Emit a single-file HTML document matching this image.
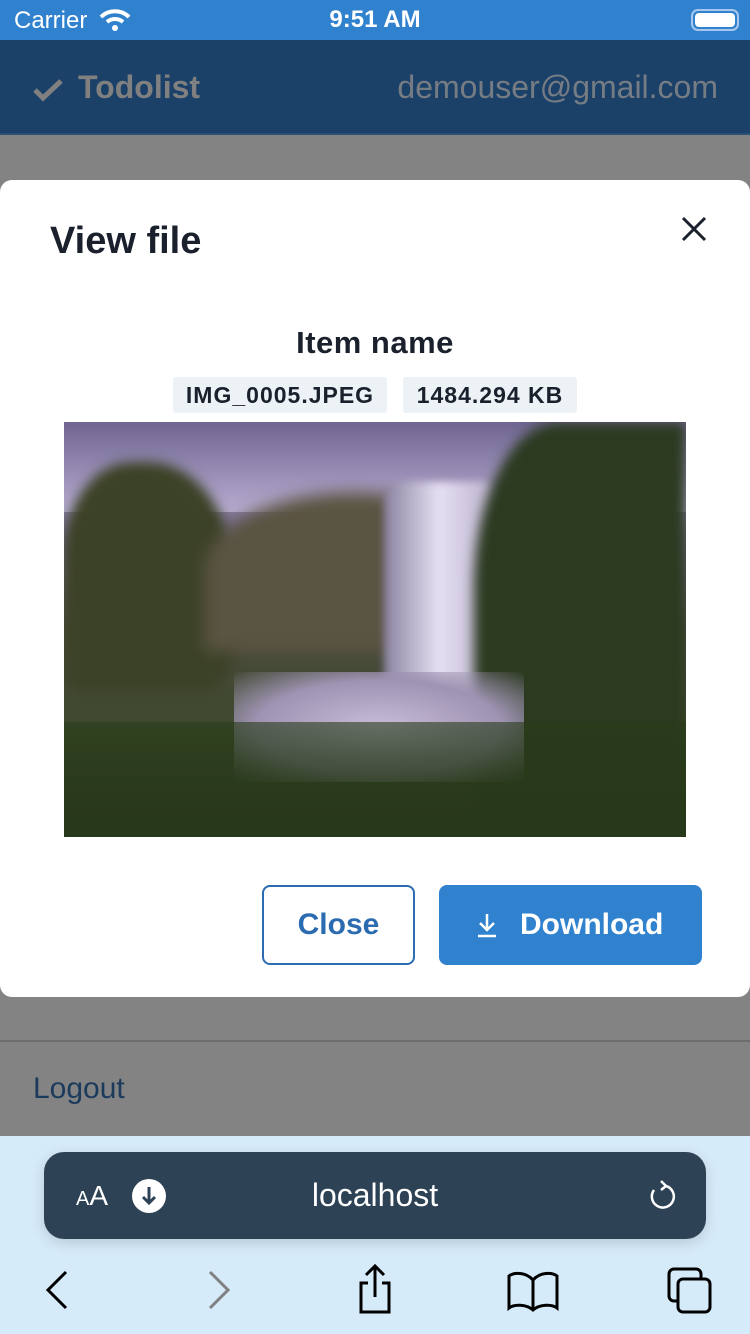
<!DOCTYPE html>
<html><head><meta charset="utf-8"><style>
*{box-sizing:border-box;margin:0;padding:0}
body{width:750px;height:1334px;position:relative;overflow:hidden;font-family:"Liberation Sans",sans-serif;background:#838383}
.abs{position:absolute}
</style></head><body>
<div class="abs" style="left:0;top:0;width:750px;height:40px;background:#3182ce"></div>
<div class="abs" style="left:14px;top:7px;color:#fff;font-size:24px">Carrier</div>
<svg class="abs" style="left:98px;top:8px" width="34" height="24" viewBox="0 0 34 24"><path d="M3 9 A20 20 0 0 1 31 9" stroke="#fff" stroke-width="4" fill="none"/><path d="M9 14 A12 12 0 0 1 25 14" stroke="#fff" stroke-width="4" fill="none"/><circle cx="17" cy="20" r="3" fill="#fff"/></svg>
<div class="abs" style="left:0;width:750px;top:6px;text-align:center;color:#fff;font-size:24px;font-weight:bold">9:51 AM</div>
<div class="abs" style="left:691px;top:9px;width:48px;height:22px;border:2px solid #a9c7ee;border-radius:7px;padding:2px"><div style="background:#fff;width:100%;height:100%;border-radius:4px"></div></div>
<div class="abs" style="left:0;top:40px;width:750px;height:95px;background:#1b4169;border-bottom:2px solid #2a5075"></div>
<svg class="abs" style="left:32px;top:78px" width="32" height="24" viewBox="0 0 32 24"><path d="M3 12 L11 20 L29 3" stroke="#808080" stroke-width="5" fill="none"/></svg>
<div class="abs" style="left:78px;top:69px;color:#808080;font-size:32px;font-weight:bold">Todolist</div>
<div class="abs" style="right:32px;top:69px;color:#767c84;font-size:32px">demouser@gmail.com</div>
<div class="abs" style="left:0;top:1040px;width:750px;height:2px;background:#6e6e6e"></div>
<div class="abs" style="left:33px;top:1072px;color:#1b3a5c;font-size:30px">Logout</div>
<div class="abs" style="left:0;top:180px;width:750px;height:817px;background:#fff;border-radius:12px"></div>
<div class="abs" style="left:50px;top:220px;font-size:38px;font-weight:bold;color:#1a202c">View file</div>
<svg class="abs" style="left:680px;top:215px" width="28" height="28"><path d="M3 3L25 25M25 3L3 25" stroke="#1a202c" stroke-width="3"/></svg>
<div class="abs" style="left:0;width:750px;top:325px;text-align:center;font-size:31px;font-weight:bold;color:#1a202c;letter-spacing:0.5px">Item name</div>
<div class="abs" style="left:173px;top:377px;width:214px;height:36px;background:#edf2f7;border-radius:3px;text-align:center;line-height:36px;font-size:23px;font-weight:bold;color:#1a202c;letter-spacing:1px">IMG_0005.JPEG</div>
<div class="abs" style="left:403px;top:377px;width:174px;height:36px;background:#edf2f7;border-radius:3px;text-align:center;line-height:36px;font-size:23px;font-weight:bold;color:#1a202c;letter-spacing:1px">1484.294 KB</div>
<div class="abs" style="left:64px;top:422px;width:622px;height:415px;overflow:hidden;background:linear-gradient(180deg,#7d70a0 0%,#9a8fb6 15%,#6d6480 30%,#4a4a3e 50%,#3e4a2c 75%,#2b3a1c 100%)">
 <div class="abs" style="left:0;top:0;width:622px;height:90px;background:linear-gradient(180deg,#6f6590,#b7acd0)"></div>
 <div class="abs" style="left:0;top:40px;width:170px;height:230px;background:#3c4226;border-radius:40% 50% 20% 10%;filter:blur(6px)"></div>
 <div class="abs" style="left:140px;top:70px;width:300px;height:160px;background:#5a5442;border-radius:50% 50% 0 0;filter:blur(8px)"></div>
 <div class="abs" style="left:320px;top:60px;width:110px;height:260px;background:linear-gradient(90deg,#8a82a0,#e6e0f2,#b9b0cc);border-radius:20px 10px 0 0;filter:blur(4px)"></div>
 <div class="abs" style="left:410px;top:0;width:212px;height:415px;background:#2c3a20;border-radius:40% 0 0 0;filter:blur(6px)"></div>
 <div class="abs" style="left:170px;top:250px;width:290px;height:110px;background:radial-gradient(ellipse,#c7bcd8,#9e93b2 60%,rgba(120,110,140,0) 100%)"></div>
 <div class="abs" style="left:0;top:300px;width:622px;height:115px;background:linear-gradient(180deg,rgba(40,60,25,0.6),#28381a)"></div>
</div>
<div class="abs" style="left:262px;top:885px;width:153px;height:80px;border:2px solid #2b6cb0;border-radius:8px;text-align:center;line-height:76px;font-size:30px;font-weight:bold;color:#2b6cb0">Close</div>
<div class="abs" style="left:439px;top:885px;width:263px;height:80px;background:#3182ce;border-radius:8px;color:#fff;font-size:30px;font-weight:bold;line-height:80px;padding-left:81px">Download</div>
<svg class="abs" style="left:476px;top:912px" width="22" height="26"><path d="M11 2V18M4 11L11 18L18 11M2 24H20" stroke="#fff" stroke-width="2.5" fill="none"/></svg>
<div class="abs" style="left:0;top:1136px;width:750px;height:198px;background:#d6ebfa"></div>
<div class="abs" style="left:44px;top:1152px;width:662px;height:87px;background:#2d4254;border-radius:20px;box-shadow:0 4px 14px rgba(0,0,0,0.15)"></div>
<div class="abs" style="left:76px;top:1180px;color:#fff;font-size:28px"><span style="font-size:20px">A</span>A</div>
<div class="abs" style="left:132px;top:1179px;width:34px;height:34px;border-radius:50%;background:#fff"></div>
<svg class="abs" style="left:132px;top:1179px" width="34" height="34"><path d="M17 8V24M11 18L17 24L23 18" stroke="#2d4254" stroke-width="3" fill="none"/></svg>
<div class="abs" style="left:0;width:750px;top:1177px;text-align:center;color:#fff;font-size:32px">localhost</div>
<svg class="abs" style="left:644px;top:1178px" width="36" height="36"><path d="M22 8 A11 11 0 1 1 10 12" stroke="#fff" stroke-width="2.5" fill="none"/><path d="M17 3L22 8L17 12" stroke="#fff" stroke-width="2.5" fill="none"/></svg>
<svg class="abs" style="left:40px;top:1268px" width="30" height="44"><path d="M26 4L8 22L26 40" stroke="#000" stroke-width="3" fill="none"/></svg>
<svg class="abs" style="left:202px;top:1268px" width="30" height="44"><path d="M8 4L26 22L8 40" stroke="#808080" stroke-width="3" fill="none"/></svg>
<svg class="abs" style="left:352px;top:1263px" width="46" height="52"><path d="M16 20H9V49H37V20H30" stroke="#000" stroke-width="3" fill="none"/><path d="M23 34V4M14 12L23 3L32 12" stroke="#000" stroke-width="3" fill="none"/></svg>
<svg class="abs" style="left:506px;top:1270px" width="54" height="42"><path d="M27 10C20 2 8 2 3 6V38C8 34 20 34 27 40C34 34 46 34 51 38V6C46 2 34 2 27 10V40" stroke="#000" stroke-width="3" fill="none"/></svg>
<svg class="abs" style="left:664px;top:1266px" width="52" height="50"><rect x="5" y="3" width="32" height="32" rx="5" stroke="#000" stroke-width="3" fill="none"/><rect x="14" y="13" width="32" height="33" rx="5" stroke="#000" stroke-width="3" fill="#d6ebfa"/></svg>
</body></html>
